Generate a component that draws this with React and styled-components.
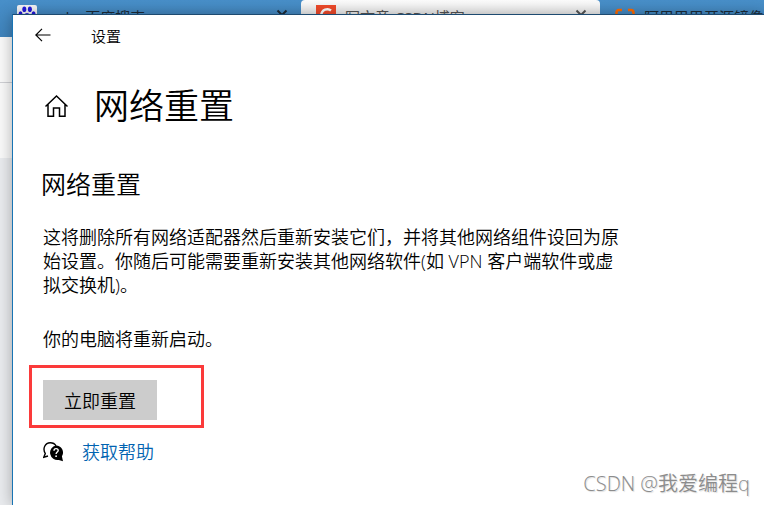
import React from "react";
import styled, { createGlobalStyle } from "styled-components";

const GlobalStyle = createGlobalStyle`
  * {
    box-sizing: border-box;
  }

  body {
    margin: 0;
    font-family: "Open Sans", "Noto Sans CJK SC", sans-serif;
    font-weight: 350;
    color: #000;
  }

  h1, h2, p {
    margin: 0;
    font-weight: inherit;
  }
`;

// Icons ----------------------------------------------------------------------

const PawIcon = () => (
  <svg width="20" height="20" viewBox="0 0 20 20" aria-hidden="true">
    <rect width="20" height="20" rx="2" fill="#f4f4f6" />
    <g fill="#2319dc">
      <ellipse cx="7.3" cy="4.2" rx="2" ry="2.8" />
      <ellipse cx="12.9" cy="4.2" rx="2" ry="2.8" />
      <ellipse cx="3.5" cy="8.8" rx="1.9" ry="2.6" />
      <ellipse cx="16.6" cy="8.8" rx="1.9" ry="2.6" />
      <path d="M10 8c2.500 0 3.500 3 5.500 5s1 5-1.500 5H6c-2.500 0-3.500-3-1.500-5S7.500 8 10 8z" />
    </g>
  </svg>
);

const CsdnIcon = () => (
  <svg width="20" height="20" viewBox="0 0 20 20" aria-hidden="true">
    <rect width="20" height="20" fill="#f04a2a" />
    <path
      d="M15 5.500C12 3 5.500 4 5 11c-.2 5 5.500 6 9 3.500"
      fill="none"
      stroke="#fff"
      strokeWidth="2.400"
    />
  </svg>
);

const BracketsIcon = () => (
  <svg width="20" height="20" viewBox="0 0 20 20" aria-hidden="true">
    <path
      d="M7 5H4Q1.500 5 1.500 8v5q0 3 2.500 3h3M13 5h3q2.500 0 2.500 3v5q0 3-2.500 3h-3"
      fill="none"
      stroke="#ff6a00"
      strokeWidth="2.600"
    />
  </svg>
);

const CloseIcon = () => (
  <svg width="12" height="12" viewBox="0 0 12 12" aria-hidden="true">
    <path d="M1.500 1.500l9 9M10.500 1.500l-9 9" stroke="currentColor" strokeWidth="2" />
  </svg>
);

const BackIcon = () => (
  <svg width="16" height="14" viewBox="0 0 16 14" aria-hidden="true">
    <path
      d="M15.500 7H1M7 .8L.8 7 7 13.200"
      fill="none"
      stroke="#000"
      strokeWidth="1.200"
    />
  </svg>
);

const HomeIcon = () => (
  <svg width="24" height="24" viewBox="0 0 24 24" aria-hidden="true">
    <path
      d="M1.500 12.500L12.500 2l11 10.500M4 10.500v11.700h5.500v-8.200h6v8.200H21V10.500"
      fill="none"
      stroke="#000"
      strokeWidth="1.500"
    />
  </svg>
);

const HelpIcon = () => (
  <svg width="20" height="20" viewBox="0 0 20 20" aria-hidden="true">
    <path
      d="M5 14l-4.200 1.200L2.300 11.500C-.8 6.500 2.200.8 7.200.8c2.800 0 4.800 1.200 5.800 3"
      fill="none"
      stroke="#000"
      strokeWidth="1.400"
    />
    <path
      d="M13 3.500a7 7 0 0 1 5.900 10.700L20 19.200l-4.200-1.300A7.200 7.200 0 1 1 13 3.500z"
      fill="#000"
    />
    <path
      d="M11 8.800c0-3 4.200-2.700 4.200-.3 0 1.600-2.100 1.600-2.100 3.500"
      fill="none"
      stroke="#fff"
      strokeWidth="1.400"
    />
    <circle cx="13.100" cy="14.200" r="0.900" fill="#fff" />
  </svg>
);

// App ------------------------------------------------------------------------

const tabs = [
  { id: 1, title: "csdn_百度搜索", icon: <PawIcon /> },
  { id: 2, title: "写文章-CSDN博客", icon: <CsdnIcon />, active: true },
  { id: 3, title: "阿里巴巴开源镜像", icon: <BracketsIcon /> },
];

const App = () => {
  return (
    <Desktop>
      <GlobalStyle />
      <Browser>
        <TabStrip>
          {tabs.map((tab) => (
            <Tab key={tab.id} $active={tab.active}>
              {tab.icon}
              <TabTitle>{tab.title}</TabTitle>
              <TabClose aria-label="关闭">
                <CloseIcon />
              </TabClose>
            </Tab>
          ))}
        </TabStrip>
        <AddressBar />
        <BookmarkBar />
      </Browser>
      <SettingsWindow>
        <TitleBar>
          <BackButton aria-label="返回">
            <BackIcon />
          </BackButton>
          <span>设置</span>
        </TitleBar>
        <PageHeader>
          <HomeIcon />
          <PageTitle>网络重置</PageTitle>
        </PageHeader>
        <Content>
          <SectionTitle>网络重置</SectionTitle>
          <Paragraph>
            这将删除所有网络适配器然后重新安装它们，并将其他网络组件设回为原始设置。你随后可能需要重新安装其他网络软件(如
            VPN 客户端软件或虚拟交换机)。
          </Paragraph>
          <Paragraph>你的电脑将重新启动。</Paragraph>
          <Highlight>
            <ResetButton>立即重置</ResetButton>
          </Highlight>
          <HelpRow>
            <HelpIcon />
            <HelpLink href="#help">获取帮助</HelpLink>
          </HelpRow>
        </Content>
      </SettingsWindow>
      <Watermark>CSDN @我爱编程q</Watermark>
    </Desktop>
  );
};

// Styled Components ----------------------------------------------------------

const Desktop = styled.div`
  position: relative;
  display: flex;
  min-height: 100vh;
  overflow: hidden;
`;

// the browser lies behind the settings window
const Browser = styled.div`
  position: absolute;
  inset: 0;
  overflow: hidden;
  background: #e9ebee;
`;

const TabStrip = styled.div`
  display: flex;
  height: 37px;
  padding-left: 2px;
  background: linear-gradient(#488fc9, #3f83bb);
`;

const Tab = styled.div`
  display: flex;
  flex: 0 0 299px;
  align-items: center;
  gap: 9px;
  height: 30px;
  padding: 0 13px 0 15px;
  border-radius: 4px 4px 0 0;
  background: ${(props) =>
    props.$active ? "linear-gradient(#fcfcfc, #dcdcdc)" : "transparent"};
  color: ${(props) => (props.$active ? "#555" : "#1c2b38")};
`;

const TabTitle = styled.span`
  flex: 1;
  overflow: hidden;
  padding-top: 4px;
  font-size: 15px;
  font-weight: 400;
  line-height: 20px;
  white-space: nowrap;
`;

const TabClose = styled.button`
  display: flex;
  padding: 0;
  border: 0;
  background: none;
  color: inherit;
`;

const AddressBar = styled.div`
  height: 46px;
  border-bottom: 1px solid #cfd0d4;
  background: #f9f9f9;
`;

const BookmarkBar = styled.div`
  height: 75px;
  background: #f9f9f9;
`;

const SettingsWindow = styled.main`
  position: relative;
  flex: 1;
  margin: 14px 0 0 12px;
  border-top: 1px solid #1d4a70;
  border-left: 1px solid #1874b4;
  background: #fff;
  box-shadow: 0 0 14px rgba(0, 0, 0, 0.3);
`;

const TitleBar = styled.header`
  display: flex;
  align-items: center;
  gap: 40px;
  height: 40px;
  padding-left: 22px;
  font-size: 15px;
`;

const BackButton = styled.button`
  display: flex;
  padding: 0;
  border: 0;
  background: none;
`;

const PageHeader = styled.div`
  display: flex;
  align-items: center;
  gap: 26px;
  padding: 27px 31px 0;
`;

const PageTitle = styled.h1`
  font-size: 35px;
  line-height: 48px;
`;

const Content = styled.div`
  max-width: 640px;
  padding: 38px 30px 0;
`;

const SectionTitle = styled.h2`
  margin-left: -2px;
  font-size: 25px;
  line-height: 32px;
`;

const Paragraph = styled.p`
  margin-top: 25px;
  font-size: 18px;
  line-height: 24px;

  & + & {
    margin-top: 30px;
  }
`;

const Highlight = styled.div`
  width: 175px;
  margin: 14px 0 0 -14px;
  padding: 12px 11px 5px;
  border: 3px solid #fb3a3a;
`;

const ResetButton = styled.button`
  display: block;
  height: 40px;
  padding: 0 21px;
  border: 0;
  background: #ccc;
  color: #000;
  font: inherit;
  font-size: 18px;
`;

const HelpRow = styled.div`
  display: flex;
  align-items: center;
  gap: 19px;
  margin-top: 12px;
`;

const HelpLink = styled.a`
  color: #0063b1;
  font-size: 18px;
  line-height: 24px;
  text-decoration: none;
`;

const Watermark = styled.div`
  position: absolute;
  right: 14px;
  bottom: 7px;
  color: #8c8c8c;
  font-size: 20px;
  line-height: 28px;
  text-shadow: 1px 1px 1px #ddd;
`;
// ----------------------------------------------------------------------------

export default App;
